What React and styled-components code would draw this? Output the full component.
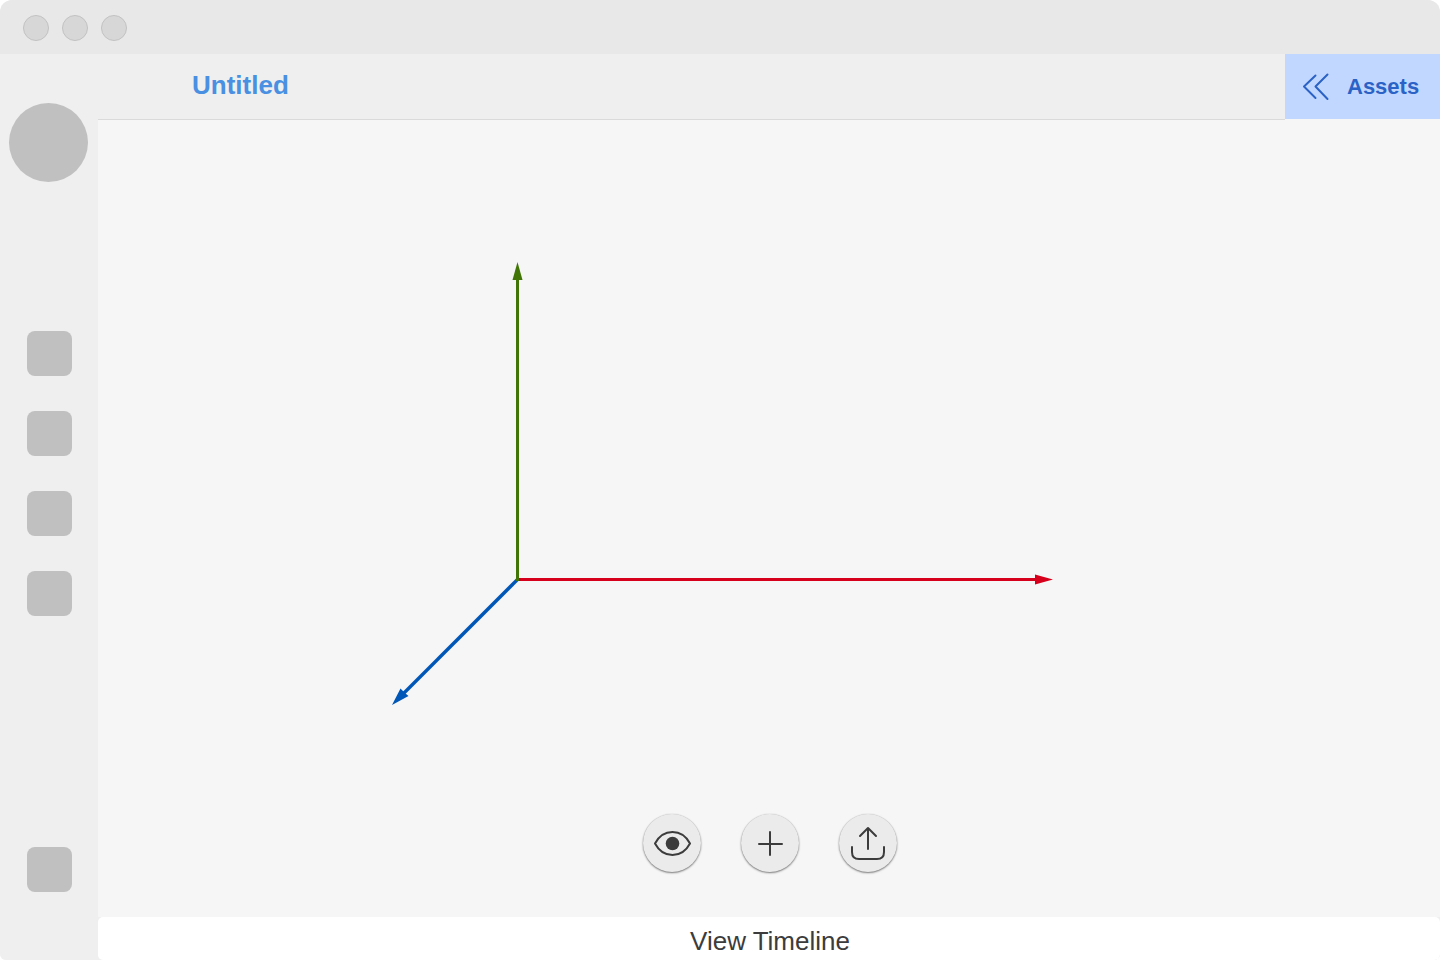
import React from "react";
import styled, { createGlobalStyle } from "styled-components";

const GlobalStyle = createGlobalStyle`
  *, *::before, *::after { box-sizing: border-box; }
  body {
    margin: 0;
    background: #ffffff;
    font-family: "Liberation Sans", Arial, Helvetica, sans-serif;
  }
  button { font-family: inherit; border: 0; padding: 0; cursor: pointer; }
`;

const Window = styled.div`
  display: flex;
  flex-direction: column;
  min-height: 100vh;
  overflow: hidden;
  border-radius: 12px 12px 6px 6px;
  background: #f6f6f6;
`;

const TitleBar = styled.div`
  display: flex;
  align-items: center;
  gap: 13px;
  height: 54px;
  padding: 2px 23px 0;
  background: #e8e8e8;
`;

const WindowButton = styled.button`
  width: 26px;
  height: 26px;
  border: 1px solid #c2c2c2;
  border-radius: 50%;
  background: #d7d7d7;
`;

const Body = styled.div`
  display: flex;
  flex: 1;
`;

const Sidebar = styled.aside`
  display: flex;
  flex-direction: column;
  width: 98px;
  padding: 49px 9px 68px;
  background: #efefef;
`;

const Avatar = styled.button`
  width: 79px;
  height: 79px;
  border-radius: 50%;
  background: #c0c0c0;
`;

const SideNav = styled.nav`
  display: flex;
  flex: 1;
  flex-direction: column;
  gap: 35px;
  padding: 149px 18px 0;
`;

const SideItem = styled.button`
  width: 45px;
  height: 45px;
  border-radius: 8px;
  background: #c0c0c0;
  margin-top: ${(p) => (p.$last ? "auto" : "0")};
`;

const Main = styled.main`
  display: flex;
  flex: 1;
  flex-direction: column;
  min-width: 0;
  background: #efefef;
`;

const Header = styled.header`
  display: flex;
  align-items: stretch;
  height: 66px;
  background: #f6f6f6;
`;

const HeaderTitle = styled.div`
  display: flex;
  flex: 1;
  align-items: center;
  padding: 0 94px 4px;
  border-bottom: 1px solid #dadada;
  background: #efefef;
`;

const Title = styled.h1`
  margin: 0;
  color: #4a90e2;
  font-size: 26px;
  line-height: 30px;
`;

const AssetsButton = styled.button`
  display: flex;
  align-items: center;
  gap: 18px;
  width: 155px;
  height: 65px;
  padding-left: 16px;
  background: #c2d7ff;
  color: #2a62c6;
  font-size: 22px;
  font-weight: bold;
  line-height: 26px;
`;

const Canvas = styled.section`
  display: flex;
  flex: 1;
  flex-direction: column;
  padding-bottom: 45px;
  background: #f6f6f6;
`;

const Scene = styled.svg`
  display: block;
  flex: 1;
  width: 100%;
  min-height: 0;
`;

const Tools = styled.div`
  display: flex;
  justify-content: center;
  gap: 40px;
  padding-left: 2px;
`;

const ToolButton = styled.button`
  display: grid;
  place-items: center;
  width: 58px;
  height: 58px;
  border-radius: 50%;
  background: #ebebeb;
  box-shadow: 0 0 1px rgba(0, 0, 0, 0.2), 0 1px 2px rgba(0, 0, 0, 0.5);
  color: #3c3c3c;
`;

const TimelineButton = styled.button`
  height: 43px;
  padding: 4px 0 0 2px;
  border-radius: 5px;
  background: #ffffff;
  color: #3c3c3c;
  font-size: 26px;
  line-height: 30px;
`;

const Line = styled.svg`
  display: block;
  fill: none;
  stroke: currentColor;
  stroke-width: 2;
  stroke-linecap: round;
  stroke-linejoin: round;
`;

const Axes = () => (
  <Scene viewBox="0 0 1342 694" role="img" aria-label="3D axes">
    <g stroke="#0057b8" fill="#0057b8">
      <path d="M419.5 459.5L303 576" strokeWidth="3.4" />
      <path d="M294 585L302.5 568.5L305 571L307.500 573.500L310.500 576Z" stroke="none" />
    </g>
    <g stroke="#d6001c" fill="#d6001c">
      <path d="M419.5 459.5H940" strokeWidth="3" />
      <path d="M955 459.5L937 454.5V464.5Z" stroke="none" />
    </g>
    <g stroke="#417505" fill="#417505">
      <path d="M419.5 461V158" strokeWidth="3" />
      <path d="M419.5 142L414.5 160H424.5Z" stroke="none" />
    </g>
  </Scene>
);

export default function App() {
  return (
    <>
      <GlobalStyle />
      <Window>
        <TitleBar>
          <WindowButton aria-label="Close" />
          <WindowButton aria-label="Minimize" />
          <WindowButton aria-label="Zoom" />
        </TitleBar>
        <Body>
          <Sidebar>
            <Avatar aria-label="Account" />
            <SideNav>
              <SideItem aria-label="Tool 1" />
              <SideItem aria-label="Tool 2" />
              <SideItem aria-label="Tool 3" />
              <SideItem aria-label="Tool 4" />
              <SideItem $last aria-label="Settings" />
            </SideNav>
          </Sidebar>
          <Main>
            <Header>
              <HeaderTitle>
                <Title>Untitled</Title>
              </HeaderTitle>
              <AssetsButton>
                <Line width="28" height="28" viewBox="0 0 28 28">
                  <path d="M14.5 2.5L3 13.500L14.5 25M26.5 1.500L14.5 13.500L26.5 26" />
                </Line>
                Assets
              </AssetsButton>
            </Header>
            <Canvas>
              <Axes />
              <Tools>
                <ToolButton aria-label="Preview">
                  <Line width="58" height="58" viewBox="1 1 58 58">
                    <path d="M13 30.5C17 23 23.5 19 30.5 19C37.5 19 44 23 48 30.5C44 38 37.5 42 30.5 42C23.5 42 17 38 13 30.5Z" />
                    <circle cx="30.5" cy="30.5" r="6.8" fill="currentColor" stroke="none" />
                  </Line>
                </ToolButton>
                <ToolButton aria-label="Add">
                  <Line width="58" height="58" viewBox="1 1 58 58">
                    <path d="M30 19V42M19 31H42" />
                  </Line>
                </ToolButton>
                <ToolButton aria-label="Share">
                  <Line width="58" height="58" viewBox="1 1 58 58">
                    <path d="M30 36V15M22 23L30 15L38 23M14 34V39Q14 46 21 46H39Q46 46 46 39V34" />
                  </Line>
                </ToolButton>
              </Tools>
            </Canvas>
            <TimelineButton>View Timeline</TimelineButton>
          </Main>
        </Body>
      </Window>
    </>
  );
}
